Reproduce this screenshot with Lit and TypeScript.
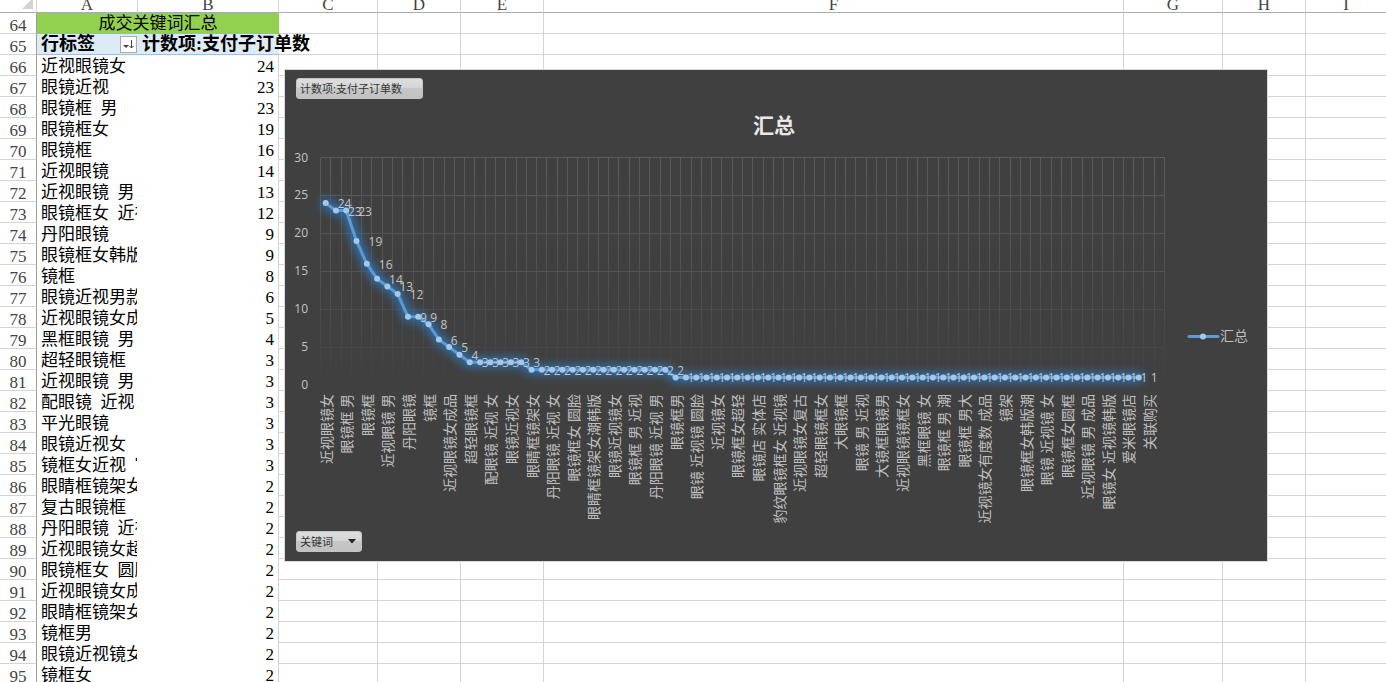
import { LitElement, html, svg, css } from "lit";
import { customElement } from "lit/decorators.js";

const FIRST_ROW = 64;

const ROWS: [string, number][] = [
  ["近视眼镜女", 24],
  ["眼镜近视", 23],
  ["眼镜框 男", 23],
  ["眼镜框女", 19],
  ["眼镜框", 16],
  ["近视眼镜", 14],
  ["近视眼镜 男", 13],
  ["眼镜框女 近视", 12],
  ["丹阳眼镜", 9],
  ["眼镜框女韩版", 9],
  ["镜框", 8],
  ["眼镜近视男款", 6],
  ["近视眼镜女成品", 5],
  ["黑框眼镜 男", 4],
  ["超轻眼镜框", 3],
  ["近视眼镜 男", 3],
  ["配眼镜 近视 女", 3],
  ["平光眼镜", 3],
  ["眼镜近视女", 3],
  ["镜框女近视 官", 3],
  ["眼睛框镜架女", 2],
  ["复古眼镜框", 2],
  ["丹阳眼镜 近视 女", 2],
  ["近视眼镜女超轻", 2],
  ["眼镜框女 圆脸", 2],
  ["近视眼镜女成品", 2],
  ["眼睛框镜架女潮韩版", 2],
  ["镜框男", 2],
  ["眼镜近视镜女", 2],
  ["镜框女", 2],
];

const CATEGORIES = [
  "近视眼镜女", "眼镜框 男", "眼镜框", "近视眼镜 男", "丹阳眼镜", "镜框",
  "近视眼镜女成品", "超轻眼镜框", "配眼镜 近视 女", "眼镜近视女",
  "眼睛框镜架女", "丹阳眼镜 近视 女", "眼镜框女 圆脸", "眼睛框镜架女潮韩版",
  "眼镜近视镜女", "眼镜框 男 近视", "丹阳眼镜 近视 男", "眼镜框男",
  "眼镜 近视镜 圆脸", "近视镜女", "眼镜框女超轻", "眼镜店 实体店",
  "豹纹眼镜框女 近视镜", "近视眼镜女复古", "超轻眼镜框女", "大眼镜框",
  "眼镜 男 近视", "大镜框眼镜男", "近视眼镜镜框女", "黑框眼镜 女",
  "眼镜框 男 潮", "眼镜框 男大", "近视镜女有度数 成品", "镜架",
  "眼镜框女韩版潮", "眼镜 近视镜 女", "眼镜框女圆框", "近视眼镜 男 成品",
  "眼镜女 近视镜韩版", "爱米眼镜店", "关联购买",
];

const VALUES: number[] = [
  24, 23, 23, 19, 16, 14, 13, 12, 9, 9, 8, 6, 5, 4,
  ...Array(6).fill(3),
  ...Array(14).fill(2),
  ...Array(46).fill(1),
];

@customElement("keyword-chart")
class KeywordChart extends LitElement {
  static styles = css`
    :host {
      display: block;
      font-family: "Open Sans", "Noto Sans CJK SC", sans-serif;
    }
    .chart {
      position: relative;
      display: flex;
      flex-direction: column;
      justify-content: space-between;
      align-items: flex-start;
      box-sizing: border-box;
      height: 493px;
      margin: 0;
      padding: 8px 11px 9px;
      border: 1px solid #d9d9d9;
      background: #404040;
    }
    .plot {
      position: absolute;
      inset: 0;
      width: 100%;
      height: 100%;
    }
    .field {
      position: relative;
      display: flex;
      align-items: center;
      justify-content: space-between;
      box-sizing: border-box;
      height: 21px;
      padding: 0 5px 0 3px;
      border: 1px solid #c4c4c4;
      border-radius: 3px;
      background: linear-gradient(#dedede, #d4d4d4 50%, #c6c6c6 50%, #c2c2c2);
      color: #333;
      font: 11px/18px "Open Sans", "Noto Sans CJK SC", sans-serif;
      white-space: nowrap;
    }
    .value {
      width: 127px;
    }
    .axis {
      width: 66px;
    }
    .arrow {
      width: 8px;
      height: 5px;
    }
    .title {
      fill: #e8e8e8;
      font-size: 21px;
      font-weight: bold;
    }
    .num {
      fill: #c4c4c4;
      font-size: 12px;
    }
    .cat {
      fill: #bfbfbf;
      font-family: Lato, "Noto Sans CJK SC", sans-serif;
      font-size: 14px;
    }
    .grid {
      fill: none;
      stroke: url(#fade);
      stroke-width: 1;
      shape-rendering: crispEdges;
    }
    .line {
      fill: none;
      stroke: #5b9bd5;
      stroke-width: 3;
      stroke-linejoin: round;
      stroke-linecap: round;
    }
    .glow {
      fill: none;
      stroke: #2f78bd;
      stroke-width: 11;
      stroke-linejoin: round;
      stroke-linecap: round;
      opacity: 0.75;
      filter: url(#blur);
    }
    .dot {
      fill: #a3c8ec;
    }
  `;

  render() {
    const left = 35.5;
    const right = 879.5;
    const top = 87.5;
    const bottom = 315;
    const step = (right - left) / 82;
    const x = (i: number) => left + step * (i + 0.5);
    const y = (v: number) => bottom - (v / 30) * (bottom - top);
    const points = VALUES.map((v, i) => `${x(i).toFixed(1)},${y(v).toFixed(1)}`).join(" ");
    let grid = "";
    for (let i = 0; i <= 82; i++) {
      grid += `M${Math.round(left + i * step - 0.5) + 0.5} ${top}V${bottom}`;
    }
    for (let v = 5; v <= 30; v += 5) {
      const gy = Math.round(y(v) - 0.5) + 0.5;
      grid += `M${left} ${gy}H${right}`;
    }
    return html`
      <figure class="chart">
        <svg class="plot" viewBox="0 0 982 491" preserveAspectRatio="xMinYMin meet" role="img" aria-label="汇总">
          <defs>
            <linearGradient id="fade" gradientUnits="userSpaceOnUse" x1="0" y1=${top} x2="0" y2=${bottom}>
              <stop offset="0" stop-color="#5c5c5c" />
              <stop offset="0.5" stop-color="#525252" />
              <stop offset="1" stop-color="#404040" />
            </linearGradient>
            <filter id="blur" filterUnits="userSpaceOnUse" x="0" y="80" width="982" height="260">
              <feGaussianBlur stdDeviation="4" />
            </filter>
          </defs>
          <path class="grid" d=${grid} />
          <text class="title" x="489" y="63" text-anchor="middle">汇总</text>
          ${[0, 5, 10, 15, 20, 25, 30].map(
            (v) => svg`<text class="num" x="23" y=${y(v) + 4} text-anchor="end">${v}</text>`
          )}
          <polyline class="glow" points=${points} />
          <polyline class="line" points=${points} />
          ${VALUES.map((v, i) => svg`<circle class="dot" cx=${x(i)} cy=${y(v)} r="3" />`)}
          ${VALUES.map((v, i) => svg`<text class="num" x=${x(i) + 12} y=${y(v) + 5}>${v}</text>`)}
          ${CATEGORIES.map(
            (c, i) => svg`<text class="cat" text-anchor="end"
              transform="translate(${x(i * 2) + 6} 324) rotate(-90)">${c}</text>`
          )}
          <line class="line" x1="904" y1="266.5" x2="933" y2="266.5" />
          <circle class="dot" cx="918" cy="266.5" r="3" />
          <text class="cat" x="935" y="271">汇总</text>
        </svg>
        <button class="field value">计数项:支付子订单数</button>
        <button class="field axis">
          关键词
          <svg class="arrow" viewBox="0 0 8 5" aria-hidden="true"><path d="M0 0H8L4 4.5Z" fill="#222" /></svg>
        </button>
      </figure>
    `;
  }
}

@customElement("app-root")
class AppRoot extends LitElement {
  static styles = css`
    :host {
      display: block;
      position: relative;
      height: 100vh;
      overflow: hidden;
      background: #fff;
      color: #000;
      font-family: "Liberation Serif", "Noto Sans CJK SC", serif;
      font-size: 17px;
      line-height: 20px;
    }
    .sheet {
      width: 100%;
      table-layout: fixed;
      border-collapse: separate;
      border-spacing: 0;
    }
    .w-row { width: 37px; }
    .w-a { width: 101px; }
    .w-b { width: 141px; }
    .w-c { width: 99px; }
    .w-d { width: 83px; }
    .w-f { width: 580px; }
    th,
    td {
      box-sizing: border-box;
      height: 21px;
      padding: 0;
      border: 0 solid #d4d4d4;
      border-width: 0 1px 1px 0;
      font-weight: normal;
      vertical-align: top;
    }
    th:last-child,
    td:last-child {
      border-right-width: 0;
    }
    thead th {
      height: 13px;
      border-bottom-color: #ababab;
      color: #444;
    }
    .letter {
      display: flex;
      align-items: flex-end;
      justify-content: center;
      height: 12px;
      overflow: hidden;
      line-height: 14px;
    }
    .corner {
      display: block;
      width: 11px;
      height: 9px;
      margin-left: 22px;
    }
    tbody th {
      border-right-color: #9c9c9c;
      color: #444;
    }
    .index {
      height: 20px;
      line-height: 25px;
      overflow: hidden;
    }
    .heading {
      border-right: 0;
      border-bottom: 0;
      background: #92d050;
      line-height: 21px;
      text-align: center;
    }
    .pivot {
      border-right: 0;
      border-bottom-color: #9bc2e6;
      background: #ddebf7;
      font-size: 18px;
      font-weight: bold;
      line-height: 21px;
    }
    .pivot-head {
      display: flex;
      align-items: center;
      justify-content: space-between;
      height: 20px;
      padding: 0 1px 0 4px;
    }
    .measure {
      height: 20px;
      padding-left: 4px;
      white-space: nowrap;
    }
    .sort {
      width: 17px;
      height: 17px;
      padding: 0;
      border: 1px solid #ababab;
      background: #fff;
    }
    .sort svg {
      display: block;
      width: 15px;
      height: 15px;
    }
    .name {
      border-color: #fff;
      border-bottom-width: 0;
    }
    .clip {
      height: 21px;
      padding-left: 4px;
      overflow: hidden;
      line-height: 23px;
      white-space: pre;
    }
    .count {
      border-bottom: 0;
      padding-right: 4px;
      line-height: 23px;
      text-align: right;
    }
    .count div {
      height: 21px;
    }
    .float {
      position: absolute;
      left: 284px;
      top: 69px;
      width: 984px;
    }
  `;

  private blanks(n: number) {
    return Array.from({ length: n }, () => html`<td></td>`);
  }

  render() {
    return html`
      <table class="sheet">
        <colgroup>
          <col class="w-row" /><col class="w-a" /><col class="w-b" /><col class="w-c" />
          <col class="w-d" /><col class="w-d" /><col class="w-f" /><col class="w-c" />
          <col class="w-d" /><col />
        </colgroup>
        <thead>
          <tr>
            <th>
              <svg class="corner" viewBox="0 0 11 9" aria-hidden="true"><path d="M11 -2V9H0Z" fill="#d4d4d4" /></svg>
            </th>
            ${[..."ABCDEFGHI"].map((l) => html`<th scope="col"><div class="letter">${l}</div></th>`)}
          </tr>
        </thead>
        <tbody>
          <tr>
            <th scope="row"><div class="index">${FIRST_ROW}</div></th>
            <td class="heading" colspan="2">成交关键词汇总</td>
            ${this.blanks(7)}
          </tr>
          <tr>
            <th scope="row"><div class="index">${FIRST_ROW + 1}</div></th>
            <td class="pivot">
              <div class="pivot-head"><span>行标签</span><button class="sort" aria-label="排序">
                <svg viewBox="0 0 15 15" aria-hidden="true">
                  <path d="M2 8H8L5 11Z" fill="#444" />
                  <path d="M10.5 3V11M8.5 9L10.5 11L12.5 9" fill="none" stroke="#444" />
                </svg>
              </button></div>
            </td>
            <td class="pivot"><div class="measure">计数项:支付子订单数</div></td>
            ${this.blanks(7)}
          </tr>
          ${ROWS.map(
            ([name, count], i) => html`
              <tr>
                <th scope="row"><div class="index">${FIRST_ROW + 2 + i}</div></th>
                <td class="name"><div class="clip">${name.replace(/ /g, "  ")}</div></td>
                <td class="count"><div>${count}</div></td>
                ${this.blanks(7)}
              </tr>
            `
          )}
        </tbody>
      </table>
      <keyword-chart class="float"></keyword-chart>
    `;
  }
}
